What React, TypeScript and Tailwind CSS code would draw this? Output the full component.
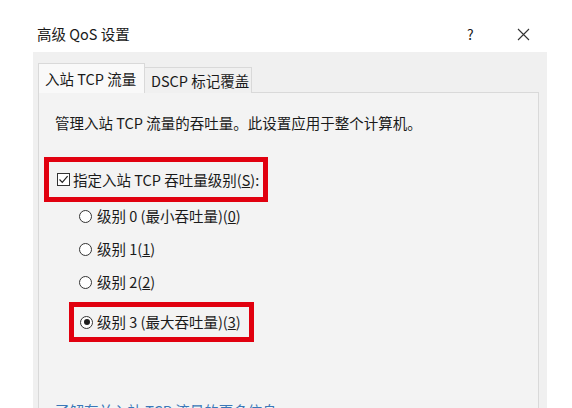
import React from "react";

function Radio({ checked }: { checked?: boolean }) {
  return (
    <span className="w-[13px] h-[13px] rounded-full border border-[#333] bg-white flex items-center justify-center shrink-0">
      {checked && <span className="w-[6px] h-[6px] rounded-full bg-[#1e1e1e]" />}
    </span>
  );
}

function Checkbox() {
  return (
    <span className="w-[13px] h-[13px] border border-[#333] bg-white flex items-center justify-center shrink-0">
      <svg width="11" height="11" viewBox="0 0 11 11">
        <path d="M1.5 5.5 L4.3 8.3 L9.6 2.2" fill="none" stroke="#222" strokeWidth="1.2" />
      </svg>
    </span>
  );
}

export default function App() {
  return (
    <div className="w-[572px] h-[408px] overflow-hidden bg-white flex flex-col font-['Noto_Sans_CJK_SC','Noto_Sans',sans-serif] text-[14.5px] text-[#1a1a1a]">
      <div className="h-[52px] shrink-0 flex items-start pt-[24px] pl-[37px]">
        <span className="leading-[20px] w-[430px] whitespace-nowrap">高级 QoS 设置</span>
        <span className="leading-[20px] text-[14px]">?</span>
        <span className="ml-[43px] mt-[4px]">
          <svg width="13" height="13" viewBox="0 0 13 13">
            <path d="M1 1 L12 12 M12 1 L1 12" stroke="#333" strokeWidth="1.1" />
          </svg>
        </span>
      </div>
      <div className="flex-1 ml-[33px] w-[514px] bg-[#f0f0f0] pl-[5px] pr-[8px] pt-[11px] flex flex-col">
        <div className="flex items-end h-[30px] -mb-px relative z-10">
          <div className="w-[107px] h-[30px] bg-[#f9f9f9] border border-b-0 border-[#d9d9d9] flex items-center pl-[6px] whitespace-nowrap">
            入站 TCP 流量
          </div>
          <div className="w-[107px] h-[26px] bg-[#f0f0f0] border-t border-r border-[#d9d9d9] flex items-center pl-[6px] whitespace-nowrap">
            DSCP 标记覆盖
          </div>
        </div>
        <div className="flex-1 border border-[#d9d9d9] bg-[#f3f3f3] flex flex-col">
          <div className="pl-[16px] pt-[20px] leading-[20px] whitespace-nowrap">
            管理入站 TCP 流量的吞吐量。此设置应用于整个计算机。
          </div>
          <div className="ml-[5px] mt-[24px] w-[224px] h-[45px] border-[5px] border-[#e1000f] flex items-center pl-[8px] gap-[3px] whitespace-nowrap">
            <Checkbox />
            <span className="leading-[20px]">
              指定入站 TCP 吞吐量级别(<span className="underline">S</span>):
            </span>
          </div>
          <div className="ml-[40px] mt-[4px] h-[20px] flex items-center gap-[5px] whitespace-nowrap">
            <Radio />
            <span>
              级别 0 (最小吞吐量)(<span className="underline">0</span>)
            </span>
          </div>
          <div className="ml-[40px] mt-[13px] h-[20px] flex items-center gap-[5px] whitespace-nowrap">
            <Radio />
            <span>
              级别 1(<span className="underline">1</span>)
            </span>
          </div>
          <div className="ml-[40px] mt-[13px] h-[20px] flex items-center gap-[5px] whitespace-nowrap">
            <Radio />
            <span>
              级别 2(<span className="underline">2</span>)
            </span>
          </div>
          <div className="ml-[30px] mt-[10px] w-[185px] h-[40px] border-[5px] border-[#e1000f] flex items-center pl-[6px] gap-[4px] whitespace-nowrap">
            <Radio checked />
            <span>
              级别 3 (最大吞吐量)(<span className="underline">3</span>)
            </span>
          </div>
          <div className="ml-[16px] mt-[59px] leading-[20px] text-[#3a77b8] whitespace-nowrap">
            了解有关入站 TCP 流量的更多信息
          </div>
        </div>
      </div>
    </div>
  );
}
